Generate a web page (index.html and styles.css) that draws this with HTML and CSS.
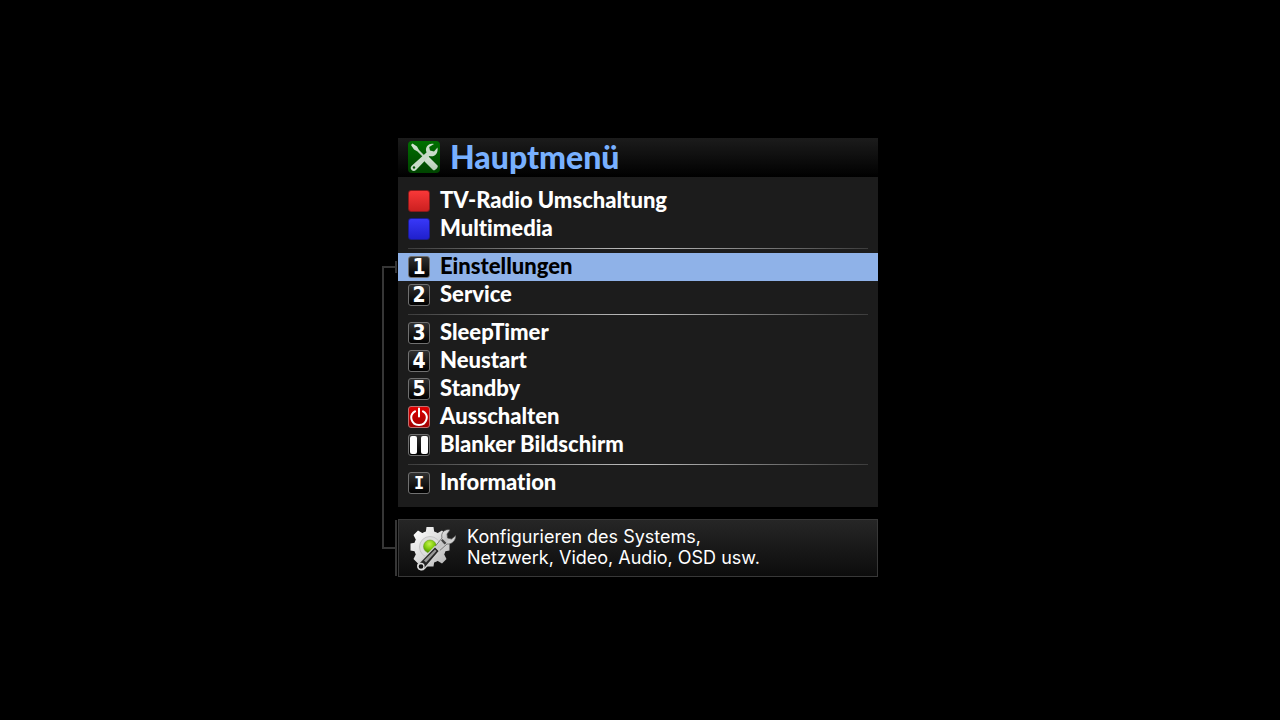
FILE: index.html
```html
<!DOCTYPE html>
<html lang="de">
<head>
  <meta charset="UTF-8">
  <meta name="viewport" content="width=device-width, initial-scale=1.0">
  <title>Hauptmenü</title>
  <link rel="stylesheet" href="styles.css">
</head>
<body>
  <div class="osd">
    <div class="bracket"></div>
    <div class="tick tick-item"></div>
    <div class="tick tick-hint"></div>

    <main class="window">
      <header class="header">
        <svg class="header-icon" viewBox="0 0 32 32" aria-hidden="true">
          <defs>
            <linearGradient id="green" x1="0" y1="0" x2="0" y2="1">
              <stop offset="0" stop-color="#007000"/>
              <stop offset="1" stop-color="#004400"/>
            </linearGradient>
            <linearGradient id="tool" x1="0" y1="0" x2="0" y2="1">
              <stop offset="0" stop-color="#d6e6d6"/>
              <stop offset="1" stop-color="#b4ccb4"/>
            </linearGradient>
          </defs>
          <rect width="32" height="32" rx="4" fill="url(#green)"/>
          <path d="M3 4l1.500-1.500 4.500 3 2 3.500 6 6-1.500 1.500-6-6L6 8.500z" fill="url(#tool)"/>
          <path d="M16 19.500l4-4 1.500 1 8 8c1.500 1.500-3 6-4.500 4.500l-8-8z" fill="url(#tool)"/>
          <path d="M26 3c-4.500-1.500-8.500 2-8 6.500l.5 2L4 24.500c-3.500 3 1 7.500 4 4.500L21.500 15c4.500 1.500 9-2 8-8.500l-3.500 4-4-1-.8-3.500z" fill="#c9dcc9"/>
          <circle cx="6" cy="26.500" r="1.200" fill="#005200"/>
        </svg>
        <h1>Hauptmenü</h1>
      </header>

      <nav class="menu">
        <button class="item"><span class="key key-red"></span><span class="label">TV-Radio Umschaltung</span></button>
        <button class="item"><span class="key key-blue"></span><span class="label">Multimedia</span></button>
        <hr>
        <button class="item active"><span class="key">1</span><span class="label">Einstellungen</span></button>
        <button class="item"><span class="key">2</span><span class="label">Service</span></button>
        <hr>
        <button class="item"><span class="key">3</span><span class="label">SleepTimer</span></button>
        <button class="item"><span class="key">4</span><span class="label">Neustart</span></button>
        <button class="item"><span class="key">5</span><span class="label">Standby</span></button>
        <button class="item">
          <span class="key key-power">
            <svg viewBox="0 0 20 20" aria-hidden="true">
              <path d="M6 4.300C-.5 8 2 18 10 18s10.500-10 4-13.700M10 1.500v8" fill="none" stroke="#fff" stroke-width="2" stroke-linecap="round"/>
            </svg>
          </span>
          <span class="label">Ausschalten</span>
        </button>
        <button class="item">
          <span class="key">
            <svg viewBox="0 0 20 20" aria-hidden="true">
              <rect x="1" y="1" width="7" height="18" rx="2" fill="#fff"/>
              <rect x="12" y="1" width="7" height="18" rx="2" fill="#fff"/>
            </svg>
          </span>
          <span class="label">Blanker Bildschirm</span>
        </button>
        <hr>
        <button class="item"><span class="key key-info">I</span><span class="label">Information</span></button>
      </nav>
    </main>

    <footer class="hint">
      <svg class="hint-icon" viewBox="0 0 46 46" aria-hidden="true">
        <defs>
          <linearGradient id="gear" x1="0" y1="0" x2="1" y2="1">
            <stop offset="0" stop-color="#ffffff"/>
            <stop offset="1" stop-color="#b8b8b8"/>
          </linearGradient>
          <radialGradient id="lamp" cx=".45" cy=".3" r=".7">
            <stop offset="0" stop-color="#c4f050"/>
            <stop offset=".5" stop-color="#86d010"/>
            <stop offset="1" stop-color="#4b8c00"/>
          </radialGradient>
          <linearGradient id="steel" x1="0" y1="0" x2="1" y2="1">
            <stop offset="0" stop-color="#ffffff"/>
            <stop offset=".5" stop-color="#c4c4c4"/>
            <stop offset="1" stop-color="#f4f4f4"/>
          </linearGradient>
        </defs>
        <g fill="url(#gear)">
          <circle cx="20" cy="21" r="16"/>
          <path d="M15.500 8l1-7h7l1 7zM15.500 34l1 6.500h7l1-6.500zM6 16.500L.5 17.500v7l5.500 1zM34 16.500l5.500 1v7l-5.500 1z"/>
          <path d="M6 14L3.500 9 8 4.500l5 3zM27 7.500l5-3L36.500 9 34 14zM6 28l-2.500 5L8 37.500l5-3zM27 34.500l5 3 4.500-4.500-2.500-5z"/>
        </g>
        <circle cx="20" cy="21" r="10.500" fill="#dedede" stroke="#c6c6c6"/>
        <circle cx="20" cy="20.500" r="6.500" fill="url(#lamp)" stroke="#6a9c20" stroke-width=".6"/>
        <path d="M40 4c-5-1.500-9.500 2.500-8 8l-9 11 4 4 10-9c4.500.5 8.500-3 9-8.500l-4.500 3.500-4-1-.5-4z" fill="url(#steel)" stroke="#555" stroke-width=".7"/>
        <path d="M31 14.500l1.500-1.500 4 4-2 1.500z" fill="#444"/>
        <path d="M25 20.500l4.500 4.500L15 42c-4 4.500-10-.5-6-5z" fill="#262626" stroke="#d0d0d0" stroke-width="1.200"/>
        <path d="M25 23.500l1.500 1.500L16 36.500l-2-2z" fill="#999"/>
        <circle cx="11" cy="40.500" r="3" fill="#111" stroke="#ddd" stroke-width="1.300"/>
      </svg>
      <p>Konfigurieren des Systems,<br>Netzwerk, Video, Audio, OSD usw.</p>
    </footer>
  </div>
</body>
</html>
```

FILE: styles.css
```css
* {
  box-sizing: border-box;
}

body {
  margin: 0;
  min-height: 100vh;
  padding: 0 20px 5px 0;
  display: flex;
  justify-content: center;
  align-items: center;
  background-color: #000;
  color: #fff;
  font-family: Lato, "Open Sans", sans-serif;
  font-variant-ligatures: none;
}

.osd {
  width: 100%;
  max-width: 496px;
  display: grid;
  grid-template-columns: 13px 3px minmax(0, 1fr);
  row-gap: 12px;
}

/* line from the selected entry to its description */
.bracket {
  grid-column: 1;
  grid-row: 1 / 3;
  margin: 128px 0 28px;
  border: 2px solid #363636;
  border-right: none;
}

.tick {
  grid-column: 2;
  width: 2px;
  background-color: #363636;
}

.tick-item {
  grid-row: 1;
  height: 12px;
  margin-top: 123px;
}

.tick-hint {
  grid-row: 2;
  margin: 1px 0;
}

.window {
  grid-column: 3;
  grid-row: 1;
  background-color: #1c1c1c;
}

.header {
  height: 39px;
  padding: 0 10px 2px;
  display: flex;
  align-items: center;
  gap: 10px;
  background: linear-gradient(#1c1c1c, #000);
}

.header-icon {
  width: 32px;
  height: 32px;
}

h1 {
  margin: 0;
  color: #78b0ff;
  font-size: 32px;
  font-weight: 900;
  line-height: 36px;
}

.menu {
  padding: 10px 0;
}

.item {
  width: 100%;
  height: 28px;
  padding: 0 10px;
  display: flex;
  align-items: center;
  gap: 10px;
  border: none;
  background: none;
  color: #fff;
  font-family: inherit;
  font-size: 22px;
  font-variant-ligatures: none;
  font-weight: 900;
  text-align: left;
}

.item.active {
  background-color: #8fb2e8;
  color: #000;
}

.label {
  padding-bottom: 2px;
  line-height: 26px;
}

hr {
  height: 1px;
  margin: 5px 10px 4px;
  border: none;
  background: linear-gradient(90deg, #3c3c3c, #bbb 48%, #bbb 52%, #3c3c3c);
}

.key {
  width: 22px;
  height: 22px;
  display: flex;
  justify-content: center;
  align-items: center;
  border: 1px solid #707070;
  border-radius: 3px;
  background: linear-gradient(#303030, #000);
  color: #fff;
  font-family: "DejaVu Sans Condensed", "DejaVu Sans", sans-serif;
  font-size: 21px;
  font-weight: bold;
  line-height: 20px;
}

.key svg {
  width: 20px;
  height: 20px;
}

.key-red {
  border-color: #8a1a1a;
  background: linear-gradient(#f83838, #cc2020);
}

.key-blue {
  border-color: #1c1c90;
  background: linear-gradient(#3838f8, #2020cc);
}

.key-power {
  border-color: #c07070;
  background: linear-gradient(#e00000, #a00000);
}

.key-info {
  font-family: "DejaVu Sans Mono", monospace;
  font-size: 17px;
}

.hint {
  grid-column: 3;
  grid-row: 2;
  padding: 6px 11px 8px;
  display: flex;
  align-items: center;
  gap: 11px;
  border: 1px solid #383838;
  background: linear-gradient(#262626, #0c0c0c);
}

.hint-icon {
  width: 46px;
  height: 46px;
  margin-bottom: -4px;
}

.hint p {
  margin: 0;
  font-family: Inter, sans-serif;
  font-size: 18px;
  line-height: 21px;
}
```
